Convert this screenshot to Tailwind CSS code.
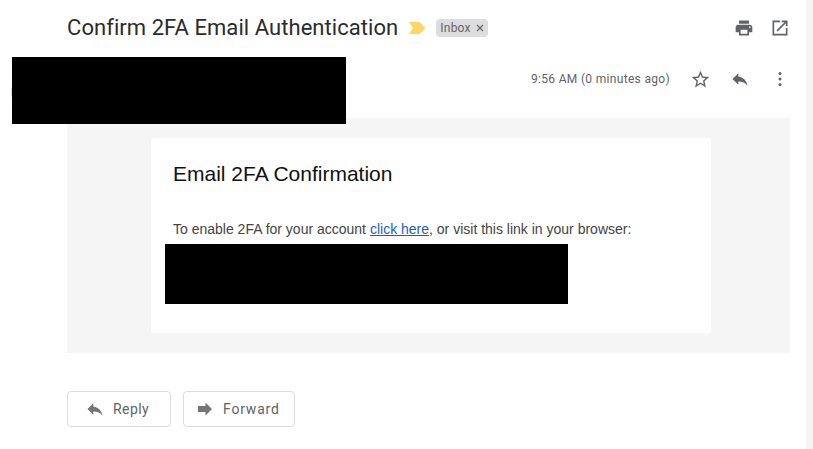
<!DOCTYPE html>
<html lang="en">
<head>
  <meta charset="UTF-8">
  <title>Confirm 2FA Email Authentication</title>
  <script src="https://cdn.jsdelivr.net/npm/@tailwindcss/browser@4"></script>
</head>
<body class="bg-white overflow-hidden font-['Roboto',sans-serif]">
  <div class="relative flex w-[813px] h-[449px]">
    <!-- mail column -->
    <div class="w-[806px] pt-[11px]">
      <!-- subject -->
      <div class="flex items-center h-[33px] pl-[67px]">
        <h1 class="text-[22px] leading-[33px] tracking-[0.06px] text-[#2a2b2e]">Confirm 2FA Email Authentication</h1>
        <svg class="ml-[11px] w-[17px] h-[12px]" viewBox="0 0 17 12"><path d="M0 0h10.500l6 6-6 6H0l4-6z" fill="#fbd661"/></svg>
        <span class="ml-[10px] flex items-center h-[18px] px-[4px] rounded-[4px] bg-[#dddddd] text-[12px] tracking-[0.2px] text-[#666666]">
          Inbox
          <svg class="ml-[5px] w-[8px] h-[8px]" viewBox="0 0 8 8"><path d="M1 1l6 6M7 1l-6 6" stroke="#666666" stroke-width="1.300"/></svg>
        </span>
        <div class="ml-auto flex items-center gap-[16px] pr-[16px]">
          <svg class="w-[20px] h-[20px]" viewBox="0 0 24 24" fill="#5f6368"><path d="M19 8H5c-1.660 0-3 1.340-3 3v6h4v4h12v-4h4v-6c0-1.660-1.340-3-3-3zm-3 11H8v-5h8v5zm3-7c-.550 0-1-.450-1-1s.450-1 1-1 1 .450 1 1-.450 1-1 1zm-1-9H6v4h12V3z"/></svg>
          <svg class="w-[20px] h-[20px]" viewBox="0 0 24 24" fill="#5f6368"><path d="M19 19H5V5h7V3H3v18h18v-9h-2v7zM14 3v2h3.590l-9.830 9.830 1.410 1.410L19 6.410V10h2V3h-7z"/></svg>
        </div>
      </div>
      <!-- sender row, the name and address are blacked out -->
      <div class="flex items-center justify-end h-[40px] mt-[15px] pr-[16px]">
        <span class="text-[12px] tracking-[0.32px] text-[#5f6368]">9:56 AM (0 minutes ago)</span>
        <svg class="ml-[20px] w-[21px] h-[21px]" viewBox="0 0 24 24" fill="#5f6368"><path d="M22 9.240l-7.190-.620L12 2 9.190 8.630 2 9.240l5.460 4.730L5.820 21 12 17.270 18.180 21l-1.630-7.030L22 9.240zM12 15.400l-3.760 2.270 1-4.280-3.320-2.880 4.380-.380L12 6.100l1.710 4.040 4.380.380-3.320 2.880 1 4.280L12 15.400z"/></svg>
        <svg class="ml-[19px] w-[20px] h-[20px]" viewBox="0 0 24 24" fill="#5f6368"><path d="M10 9V5l-7 7 7 7v-4.100c5 0 8.500 1.600 11 5.100-1-5-4-10-11-11z"/></svg>
        <svg class="ml-[20px] w-[20px] h-[20px]" viewBox="0 0 24 24" fill="#5f6368"><circle cx="12" cy="5.500" r="1.800"/><circle cx="12" cy="12" r="1.800"/><circle cx="12" cy="18.500" r="1.800"/></svg>
      </div>
      <!-- message body -->
      <div class="mt-[19px] ml-[67px] w-[723px] h-[235px] bg-[#f5f5f5] pt-[20px] pl-[84px]">
        <div class="relative w-[560px] h-[195px] bg-white rounded-[3px] pt-[23px] px-[22px]">
          <h2 class="font-['Liberation_Sans',sans-serif] text-[21px] leading-[26px] text-[#111111]">Email 2FA Confirmation</h2>
          <p class="mt-[33px] font-['Liberation_Sans',sans-serif] text-[14px] leading-[18px] text-[#444444]">To enable 2FA for your account <a href="#" class="text-[#1a5dc8] underline">click here</a>, or visit this link in your browser:</p>
          <div class="absolute left-[14px] top-[106px] w-[403px] h-[60px] bg-black"></div>
        </div>
      </div>
      <!-- reply / forward -->
      <div class="flex gap-[12px] mt-[38px] ml-[67px]">
        <button class="flex items-center w-[104px] h-[36px] pl-[17px] rounded-[4px] border border-[#dadce0] text-[14px] tracking-[0.45px] text-[#5f6368]">
          <svg class="w-[20px] h-[20px] mr-[8px]" viewBox="0 0 24 24" fill="#757575"><path d="M10 9V5l-7 7 7 7v-4.100c5 0 8.500 1.600 11 5.100-1-5-4-10-11-11z"/></svg>
          Reply
        </button>
        <button class="flex items-center w-[112px] h-[36px] pl-[12px] rounded-[4px] border border-[#dadce0] text-[14px] tracking-[0.8px] text-[#5f6368]">
          <svg class="w-[18px] h-[18px] mr-[9px]" viewBox="0 0 18 18" fill="#757575"><path d="M9.500 2.500L16 9l-6.500 6.500V12H2V6h7.500z"/></svg>
          Forward
        </button>
      </div>
    </div>
    <!-- scrollbar track -->
    <div class="w-[7px] bg-[#f5f5f5]"></div>
    <!-- avatar edge and redaction over the sender row -->
    <div class="absolute left-[11px] top-[72px] w-[40px] h-[40px] rounded-full bg-[#d8d8d8]"></div>
    <div class="absolute left-[12px] top-[57px] w-[334px] h-[67px] bg-black"></div>
  </div>
</body>
</html>
